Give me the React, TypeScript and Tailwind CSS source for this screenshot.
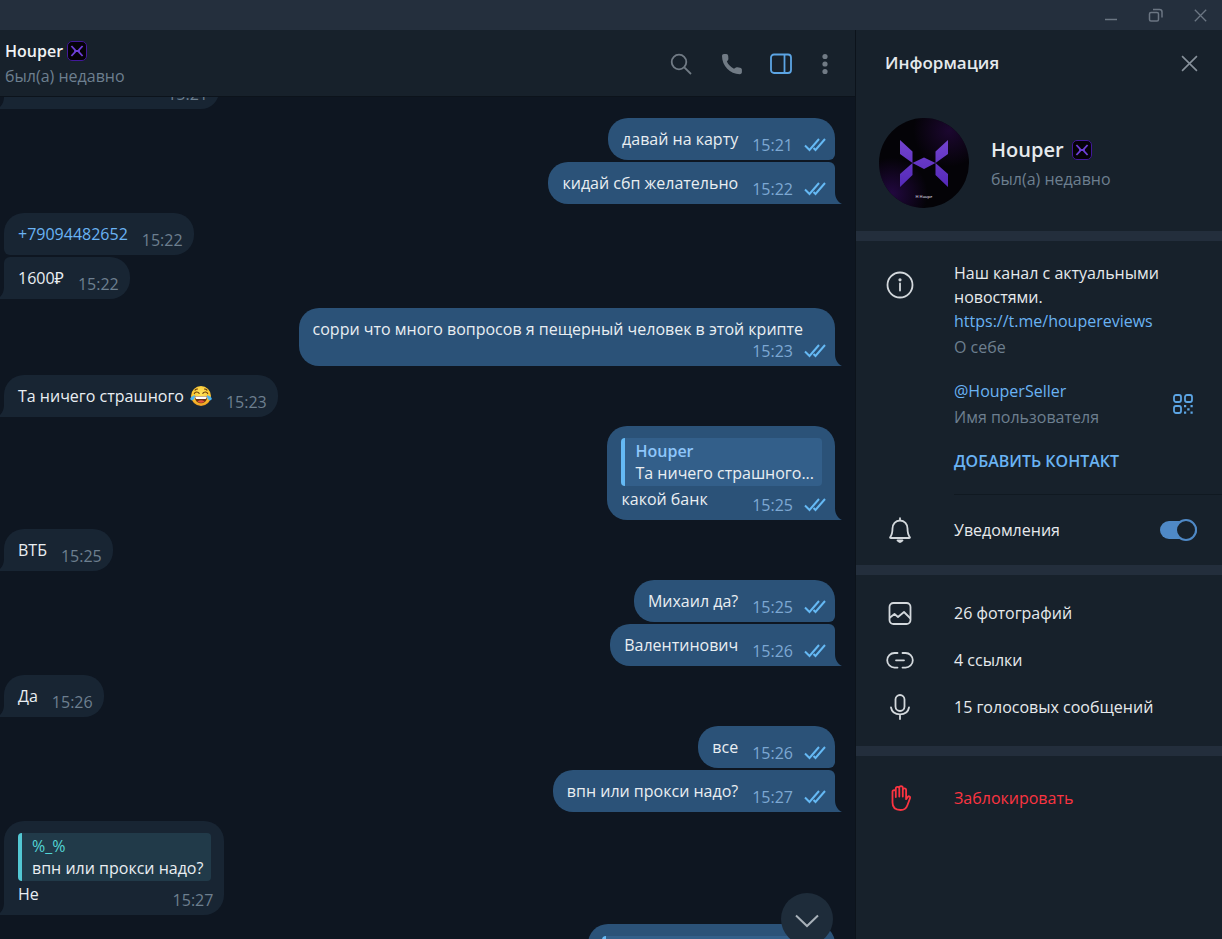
import type { ReactNode } from "react";
import clsx from "clsx";

type Message = {
  id: number;
  own?: boolean;
  text?: ReactNode;
  time?: string;
  quote?: { author: string; text: string };
  // time goes under the text instead of beside it
  stacked?: boolean;
};

const JoyEmoji = () => (
  <svg
    viewBox="0 0 22 22"
    role="img"
    aria-label="😂"
    className="ml-1.5 inline-block size-[22px] align-top"
  >
    <defs>
      <radialGradient id="joy" cx="50%" cy="35%" r="65%">
        <stop offset="0" stopColor="#ffe45c" />
        <stop offset="0.7" stopColor="#fdc62f" />
        <stop offset="1" stopColor="#ee9820" />
      </radialGradient>
    </defs>
    <circle cx="11" cy="11" r="10" fill="url(#joy)" />
    <path
      d="M4.3 8.6C5.2 6.6 7.8 6.4 9.2 8.3M12.8 8.3C14.2 6.4 16.8 6.6 17.7 8.6M5 5.2Q6 4 7.5 4M17 5.2Q16 4 14.5 4"
      fill="none"
      stroke="#6b3c0c"
      strokeWidth="1.1"
      strokeLinecap="round"
    />
    <path d="M4.6 11.2H17.4C17.2 15.6 14.5 18.2 11 18.2S4.8 15.6 4.6 11.2Z" fill="#6b3410" />
    <path d="M5.2 11.5H16.8C16.7 13.2 16.2 13.9 15.6 13.9H6.4C5.8 13.9 5.3 13.2 5.2 11.5Z" fill="#fff" />
    <path d="M7.4 16.6Q11 13.8 14.6 16.6Q11 19 7.4 16.6Z" fill="#e8523c" />
    <path d="M4.9 9.9C5.2 13 3.8 15.4 1.9 15.3C-.3 15.1-.1 12.7 1.5 11.7Z" fill="#4db4f0" />
    <path d="M17.1 9.9C16.8 13 18.2 15.4 20.1 15.3C22.3 15.1 22.1 12.7 20.5 11.7Z" fill="#4db4f0" />
  </svg>
);

const groups: Message[][] = [
  [{ id: 1, time: "15:21" }],
  [
    { id: 2, own: true, text: "давай на карту", time: "15:21" },
    { id: 3, own: true, text: "кидай сбп желательно", time: "15:22" },
  ],
  [
    {
      id: 4,
      text: (
        <a href="tel:+79094482652" className="text-[#6ab3f3]">
          +79094482652
        </a>
      ),
      time: "15:22",
    },
    { id: 5, text: "1600₽", time: "15:22" },
  ],
  [
    {
      id: 6,
      own: true,
      text: "сорри что много вопросов я пещерный человек в этой крипте",
      time: "15:23",
      stacked: true,
    },
  ],
  [
    {
      id: 7,
      text: (
        <>
          Та ничего страшного
          <JoyEmoji />
        </>
      ),
      time: "15:23",
    },
  ],
  [
    {
      id: 8,
      own: true,
      text: "какой банк",
      time: "15:25",
      quote: { author: "Houper", text: "Та ничего страшного..." },
    },
  ],
  [{ id: 9, text: "ВТБ", time: "15:25" }],
  [
    { id: 10, own: true, text: "Михаил да?", time: "15:25" },
    { id: 11, own: true, text: "Валентинович", time: "15:26" },
  ],
  [{ id: 12, text: "Да", time: "15:26" }],
  [
    { id: 13, own: true, text: "все", time: "15:26" },
    { id: 14, own: true, text: "впн или прокси надо?", time: "15:27" },
  ],
  [
    {
      id: 15,
      text: "Не",
      time: "15:27",
      quote: { author: "%_%", text: "впн или прокси надо?" },
    },
  ],
  [{ id: 16, own: true, quote: { author: "", text: "" } }],
];

const Badge = () => (
  <svg viewBox="0 0 20 20" className="size-5 shrink-0" aria-hidden="true">
    <rect x="0.5" y="0.5" width="19" height="19" rx="4.5" fill="#050208" stroke="#42199a" />
    <path
      d="M4.4 5L8 8.8V10L8 11.2L4.4 15M15.6 5L12 8.8V11.2L15.6 15M8 10H12"
      fill="none"
      stroke="#6d3fd6"
      strokeWidth="1.8"
    />
  </svg>
);

const Avatar = () => (
  <svg viewBox="0 0 90 90" className="size-[90px] shrink-0" role="img" aria-label="Houper">
    <defs>
      <radialGradient id="glow-a" cx="78%" cy="14%" r="40%">
        <stop offset="0" stopColor="#1c0730" />
        <stop offset="1" stopColor="#1c0730" stopOpacity="0" />
      </radialGradient>
      <radialGradient id="glow-b" cx="14%" cy="84%" r="40%">
        <stop offset="0" stopColor="#220840" />
        <stop offset="1" stopColor="#220840" stopOpacity="0" />
      </radialGradient>
      <linearGradient id="mark" x1="0" y1="22" x2="0" y2="69" gradientUnits="userSpaceOnUse">
        <stop offset="0" stopColor="#7343cf" />
        <stop offset="1" stopColor="#5429b8" />
      </linearGradient>
    </defs>
    <circle cx="45" cy="45" r="45" fill="#040307" />
    <circle cx="45" cy="45" r="45" fill="url(#glow-a)" />
    <circle cx="45" cy="45" r="45" fill="url(#glow-b)" />
    <path
      d="M21 22L33.5 33.5V45L21 36ZM33.5 45V57L21 69V56ZM69 22L56.5 33.5V45L69 36ZM56.5 45V57L69 69V56ZM33.5 45L45 39.5L56.5 45L45 51Z"
      fill="url(#mark)"
    />
    <text x="45" y="80" textAnchor="middle" fontSize="4" fontWeight="600" fill="#c9c4d4">
      H Houpe
    </text>
  </svg>
);

const Checks = () => (
  <svg
    viewBox="0 0 22 14"
    className="mb-1 ml-[11px] h-[14px] w-[22px]"
    fill="none"
    stroke="#65b9f4"
    strokeWidth="2"
    aria-hidden="true"
  >
    <path d="M1 7.5L5.5 12L15 1M9.5 10L11.5 12L21 1" />
  </svg>
);

const Bubble = ({ message, first, last }: { message: Message; first: boolean; last: boolean }) => {
  const { own, text, time, quote, stacked } = message;

  return (
    <div
      className={clsx(
        "relative max-w-[75%] rounded-[20px] pt-[10px] pb-1 pl-[14px]",
        own ? "self-end bg-[#2b5278] pr-[9px]" : "self-start bg-[#182533] pr-[11px]",
        own && !first && "rounded-tr-md",
        own && (last ? "rounded-br-none" : "rounded-br-md"),
        !own && !first && "rounded-tl-md",
        !own && (last ? "rounded-bl-none" : "rounded-bl-md"),
        !own && !text && "min-w-[215px]",
      )}
    >
      {quote && (
        <div
          className={clsx(
            "my-0.5 min-h-12 rounded border-l-4 py-0.5 pr-2 pl-[10px]",
            own ? "mr-1 border-[#65b9f4] bg-[#335f8a]" : "mr-0.5 border-[#53c7d3] bg-[#213a49]",
            !quote.text && "min-w-[220px]",
          )}
        >
          <p className={own ? "font-semibold text-[#8ec6fb]" : "text-[#53d5d5]"}>{quote.author}</p>
          <p>{quote.text}</p>
        </div>
      )}
      <div
        className={clsx(
          "flex items-end",
          stacked ? "flex-col" : "justify-between gap-[14px]",
        )}
      >
        <p className={stacked ? "mr-[23px]" : "pb-[6px]"}>{text}</p>
        <span className={clsx("flex items-end", own ? "text-[#7da8d3]" : "text-[#6d7f8f]")}>
          <time>{time}</time>
          {own && <Checks />}
        </span>
      </div>
      {last && (
        <svg
          viewBox="0 0 7 12"
          className={clsx(
            "absolute bottom-0 h-3 w-[7px]",
            own ? "left-full fill-[#2b5278]" : "right-full -scale-x-100 fill-[#182533]",
          )}
          aria-hidden="true"
        >
          <path d="M0 0C0 6 3 10 7 12H0Z" />
        </svg>
      )}
    </div>
  );
};

const IconButton = ({ label, children }: { label: string; children: ReactNode }) => (
  <button type="button" aria-label={label} className="flex size-6 items-center justify-center">
    {children}
  </button>
);

const CloseIcon = ({ className }: { className: string }) => (
  <svg viewBox="0 0 16 16" className={className} fill="none" stroke="currentColor">
    <path d="M1 1L15 15M15 1L1 15" />
  </svg>
);

const TitleBar = () => (
  <div className="flex h-[30px] shrink-0 items-center justify-end gap-5 bg-[#242f3d] pr-[10px] text-[#6b7683]">
    <IconButton label="Свернуть">
      <svg viewBox="0 0 24 24" className="size-6" stroke="currentColor" strokeWidth="1.5">
        <path d="M5 16.5H17" />
      </svg>
    </IconButton>
    <IconButton label="Развернуть">
      <svg viewBox="0 0 24 24" className="size-6" fill="none" stroke="currentColor" strokeWidth="1.5">
        <rect x="5.5" y="9.5" width="9" height="8.5" rx="1.5" />
        <path d="M9 6.5H15.5Q18 6.5 18 9V14.5" />
      </svg>
    </IconButton>
    <IconButton label="Закрыть">
      <CloseIcon className="size-[13px] stroke-[1.6]" />
    </IconButton>
  </div>
);

const ChatHeader = () => (
  <header className="flex h-[67px] shrink-0 items-center justify-between border-b border-[#0c131b] bg-[#17212b] pt-px pr-[18px] pl-[5px]">
    <div>
      <h1 className="flex items-center gap-1 leading-6 font-semibold text-[#f0f3f5]">
        Houper <Badge />
      </h1>
      <p className="leading-[26px] text-[#6d7f8f]">был(а) недавно</p>
    </div>
    <div className="flex items-center text-[#717b85]">
      <div className="flex gap-[26px]">
        <IconButton label="Поиск">
          <svg viewBox="0 0 24 24" className="size-6" fill="none" stroke="currentColor" strokeWidth="1.8">
            <circle cx="10" cy="10" r="7.3" />
            <path d="M15.3 15.3L22 22" />
          </svg>
        </IconButton>
        <IconButton label="Позвонить">
          <svg viewBox="0 0 24 24" className="size-6" fill="currentColor">
            <path d="M5 2H7.2C8.5 2 9 2.8 9.2 4L9.4 6.4C9.5 7.4 9.1 8 8.2 9L7.9 9.6C9.2 12.6 11.6 15 15 16.7L16.1 15.9C16.9 15.3 17.6 15.1 18.5 15.3L21 15.8C22.2 16.1 22.9 16.7 22.9 17.9V20C22.9 21.3 22.1 22.2 20.8 22.2C11 22.2 3 13.8 3 4.1C3 2.8 3.8 2 5 2Z" />
          </svg>
        </IconButton>
        <IconButton label="Панель информации">
          <svg viewBox="0 0 24 24" className="size-6" fill="none" stroke="#5ca5e4" strokeWidth="1.8">
            <rect x="2" y="2.5" width="20" height="18.5" rx="3" />
            <path d="M15.5 2.5V21" />
          </svg>
        </IconButton>
      </div>
      <div className="ml-5 flex">
        <IconButton label="Меню">
          <svg viewBox="0 0 24 24" className="size-6" fill="currentColor">
            <circle cx="12" cy="4.5" r="2.6" />
            <circle cx="12" cy="12" r="2.6" />
            <circle cx="12" cy="19.5" r="2.6" />
          </svg>
        </IconButton>
      </div>
    </div>
  </header>
);

const Chat = () => (
  <main className="relative flex min-w-0 flex-1 flex-col overflow-hidden bg-[#0e1621]">
    <ChatHeader />
    <div className="min-h-0 flex-1 overflow-hidden">
      <div className="-mt-6 flex flex-col gap-[9px] pr-5 pl-1">
        {groups.map((group) => (
          <div key={group[0].id} className="flex flex-col gap-0.5">
            {group.map((message, i) => (
              <Bubble
                key={message.id}
                message={message}
                first={i === 0}
                last={i === group.length - 1}
              />
            ))}
          </div>
        ))}
      </div>
    </div>
    <button
      type="button"
      aria-label="Прокрутить вниз"
      className="absolute right-[22px] -bottom-[6px] flex size-[52px] items-center justify-center rounded-full bg-[#1e2c3a]"
    >
      <svg viewBox="0 0 24 14" className="mt-1 h-[14px] w-6" fill="none" stroke="#a8b1b9" strokeWidth="2">
        <path d="M1 1.5L12 12L23 1.5" />
      </svg>
    </button>
  </main>
);

const RowIcon = ({ children, className }: { children: ReactNode; className?: string }) => (
  <svg
    viewBox="0 0 28 28"
    className={clsx("size-7 shrink-0 text-[#d3d8dc]", className)}
    fill="none"
    stroke="currentColor"
    strokeWidth="1.8"
    strokeLinecap="round"
    strokeLinejoin="round"
    aria-hidden="true"
  >
    {children}
  </svg>
);

const mediaRows = [
  {
    label: "26 фотографий",
    icon: (
      <>
        <rect x="3.5" y="4" width="21" height="21" rx="4" />
        <path d="M4 18.5L8.5 15L12 18L18 13L24 19" />
      </>
    ),
  },
  {
    label: "4 ссылки",
    icon: <path d="M11.5 7H8.5A7.3 7.3 0 0 0 8.5 21.6H11.5M16.5 7H19.5A7.3 7.3 0 0 1 19.5 21.6H16.5M10 14.3H18" />,
  },
  {
    label: "15 голосовых сообщений",
    icon: (
      <>
        <rect x="9.5" y="2" width="9" height="16" rx="4.5" />
        <path d="M5 14.5C5.8 19 9.2 21.3 14 21.3S22.2 19 23 14.5M14 21.5V26" />
      </>
    ),
  },
];

const Divider = () => <div className="h-[10px] shrink-0 bg-[#232e3c]" />;

const InfoPanel = () => (
  <aside className="flex w-[367px] shrink-0 flex-col border-l border-[#0c131b] bg-[#17212b] text-[#e6eaed]">
    <div className="flex h-[66px] items-center justify-between pr-[21px] pl-[29px]">
      <h2 className="text-[17px] leading-6 font-semibold">Информация</h2>
      <button
        type="button"
        aria-label="Закрыть панель"
        className="flex size-6 items-center justify-center text-[#87919b]"
      >
        <CloseIcon className="size-[17px] stroke-[1.5]" />
      </button>
    </div>

    <div className="flex gap-[22px] pt-[22px] pb-[23px] pl-[23px]">
      <Avatar />
      <div className="pt-4">
        <h3 className="flex items-center gap-2 text-xl leading-8 font-semibold">
          Houper <Badge />
        </h3>
        <p className="leading-[26px] text-[#6d7f8f]">был(а) недавно</p>
      </div>
    </div>
    <Divider />

    <div className="flex gap-10 pt-5 pl-[30px]">
      <RowIcon className="mt-[10px]">
        <circle cx="14" cy="14" r="12.5" />
        <path d="M14 12.5V19.5" />
        <circle cx="14" cy="8.8" r="0.7" fill="currentColor" />
      </RowIcon>
      <div className="flex-1">
        <div className="leading-6">
          <p>Наш канал с актуальными новостями.</p>
          <a href="https://t.me/houpereviews" className="text-[#6ab3f3]">
            https://t.me/houpereviews
          </a>
          <p className="pt-0.5 text-[#6d7f8f]">О себе</p>
        </div>
        <div className="mt-[19px] flex items-center justify-between pr-7">
          <div className="leading-[26px]">
            <a href="https://t.me/HouperSeller" className="text-[#6ab3f3]">
              @HouperSeller
            </a>
            <p className="text-[#6d7f8f]">Имя пользователя</p>
          </div>
          <button type="button" aria-label="QR-код">
            <svg viewBox="0 0 22 22" className="size-[22px]" fill="none" stroke="#5ca5e4" strokeWidth="1.8">
              <rect x="2" y="2" width="7" height="7" rx="2" />
              <rect x="13" y="2" width="7" height="7" rx="2" />
              <rect x="2" y="13" width="7" height="7" rx="2" />
              <path
                d="M12 12h2.2v2.2H12zM18.5 12h2.2v2.2h-2.2zM15.2 15.2h2.4v2.4h-2.4zM12 18.6h2.2v2.2H12zM18.5 18.6h2.2v2.2h-2.2z"
                fill="#5ca5e4"
                stroke="none"
              />
            </svg>
          </button>
        </div>
        <button type="button" className="mt-[19px] block leading-6 font-semibold text-[#6ab3f3]">
          ДОБАВИТЬ КОНТАКТ
        </button>
        <div className="mt-[21px] border-t border-[#101921]" />
      </div>
    </div>

    <label className="flex h-[70px] items-center pr-[25px] pl-[30px]">
      <RowIcon>
        <path d="M4 21.5C6 19 6.5 17 6.5 12.5C6.5 8 9.5 4.5 14 4.5S21.5 8 21.5 12.5C21.5 17 22 19 24 21.5Q24 22 23.2 22H4.8Q4 22 4 21.5ZM14 2.2V4" />
        <path d="M11.5 24.5Q14 27.5 16.5 24.5Z" fill="currentColor" />
      </RowIcon>
      <span className="ml-10 flex-1">Уведомления</span>
      <input type="checkbox" role="switch" defaultChecked className="peer sr-only" />
      <span className="flex h-[18px] w-[37px] items-center justify-start rounded-full bg-[#6d7f8f] peer-checked:justify-end peer-checked:bg-[#4f89c6]">
        <span className="size-[22px] shrink-0 rounded-full border-2 border-[#4f89c6] bg-[#17212b]" />
      </span>
    </label>
    <Divider />

    <ul className="pt-[14px] pb-4">
      {mediaRows.map((row) => (
        <li key={row.label}>
          <button type="button" className="flex h-[47px] w-full items-center gap-10 pl-[30px] text-left">
            <RowIcon>{row.icon}</RowIcon>
            {row.label}
          </button>
        </li>
      ))}
    </ul>
    <Divider />

    <button type="button" className="mt-[18px] flex h-12 items-center gap-10 pl-[30px] text-[#fb3441]">
      <RowIcon className="text-[#fb3441]!">
        <path d="M6.5 15V7.7A1.6 1.6 0 0 1 9.8 7.7V13M9.8 13V4.6A1.7 1.7 0 0 1 13.3 4.6V12.5M13.3 6V3.9A1.7 1.7 0 0 1 16.8 3.9V12.5M16.8 6A1.6 1.6 0 0 1 20.1 6V15.2L21.9 12.8C22.8 11.7 24.6 12.6 24.1 14L21.4 21.2C20.4 24.2 18.4 26 14.6 26C9.5 26 6.5 23.4 6.5 18.5V14" />
      </RowIcon>
      Заблокировать
    </button>
  </aside>
);

export default function App() {
  return (
    <div className="flex h-screen flex-col overflow-hidden bg-[#0e1621] font-['Open_Sans','Noto_Sans',sans-serif] text-base leading-[22px] text-[#e9eef2]">
      <TitleBar />
      <div className="flex min-h-0 flex-1">
        <Chat />
        <InfoPanel />
      </div>
    </div>
  );
}
